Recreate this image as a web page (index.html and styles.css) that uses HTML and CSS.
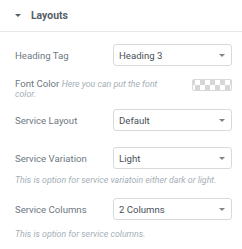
FILE: index.html
```html
<!DOCTYPE html>
<html lang="en">

<head>
    <meta charset="UTF-8">
    <meta name="viewport" content="width=device-width, initial-scale=1.0">
    <title>Layouts</title>
    <link rel="stylesheet" href="styles.css">
</head>

<body>
    <div class="panel">
        <div class="section-head">
            <span class="head-caret"></span>
            <span class="head-title">Layouts</span>
        </div>

        <div class="controls">
            <div class="control control-tag">
                <div class="control-label">Heading Tag</div>
                <div class="select"><span>Heading 3</span><span class="caret"></span></div>
            </div>

            <div class="control control-color">
                <div class="color-label">Font Color <em class="inline-desc">Here you can put the font</em> <em class="inline-desc">color.</em></div>
                <div class="swatch"></div>
            </div>

            <div class="control control-layout">
                <div class="control-label">Service Layout</div>
                <div class="select"><span>Default</span><span class="caret"></span></div>
            </div>

            <div class="control control-variation">
                <div class="control-label">Service Variation</div>
                <div class="select"><span>Light</span><span class="caret"></span></div>
            </div>
            <p class="description desc-variation">This is option for service variatoin either dark or light.</p>

            <div class="control control-columns">
                <div class="control-label">Service Columns</div>
                <div class="select"><span>2 Columns</span><span class="caret"></span></div>
            </div>
            <p class="description desc-columns">This is option for service columns.</p>
        </div>
    </div>
</body>

</html>
```

FILE: styles.css
```css
* {
    box-sizing: border-box;
    margin: 0;
    padding: 0;
}

body {
    font-family: Roboto, "Liberation Sans", sans-serif;
    background-color: #fff;
    color: #6d7882;
}

.section-head {
    height: 32px;
    display: flex;
    align-items: center;
    padding-left: 15px;
    border-bottom: 1px solid #e6e9ec;
}

.head-caret {
    width: 0;
    height: 0;
    border-left: 3px solid transparent;
    border-right: 3px solid transparent;
    border-top: 3.5px solid #556068;
    margin-right: 10px;
}

.head-title {
    font-size: 10.4px;
    font-weight: bold;
    color: #556068;
}

.controls {
    padding: 0 10px 0 15px;
}

.control {
    display: flex;
    align-items: center;
}

.control-label {
    width: 98px;
    font-size: 9.6px;
    color: #6d7882;
}

.select {
    flex: 1;
    height: 22px;
    display: flex;
    align-items: center;
    justify-content: space-between;
    padding: 0 6px 0 5px;
    border: 1px solid #d5dadf;
    border-radius: 3px;
    font-size: 9.6px;
    color: #495157;
}

.caret {
    width: 0;
    height: 0;
    border-left: 3px solid transparent;
    border-right: 3px solid transparent;
    border-top: 3px solid #7d858c;
}

.control-tag {
    margin-top: 12px;
}

.control-color {
    margin-top: 13px;
    align-items: flex-start;
    justify-content: space-between;
}

.color-label {
    width: 160px;
    font-size: 9.6px;
    line-height: 10px;
}

.inline-desc {
    font-size: 8.8px;
    color: #a4afb7;
}

.swatch {
    width: 40px;
    height: 12px;
    border: 1px solid #d5dadf;
    border-radius: 2px;
    background-color: #fff;
    background-image: conic-gradient(#d6d6d6 25%, transparent 0 50%, #d6d6d6 0 75%, transparent 0);
    background-size: 10px 10px;
    background-position: 2px 0;
}

.control-layout {
    margin-top: 10px;
}

.control-variation {
    margin-top: 16px;
}

.description {
    font-size: 8.8px;
    line-height: 11px;
    font-style: italic;
    color: #a4afb7;
}

.desc-variation {
    margin-top: 6px;
}

.control-columns {
    margin-top: 12px;
}

.desc-columns {
    margin-top: 9px;
}
```
